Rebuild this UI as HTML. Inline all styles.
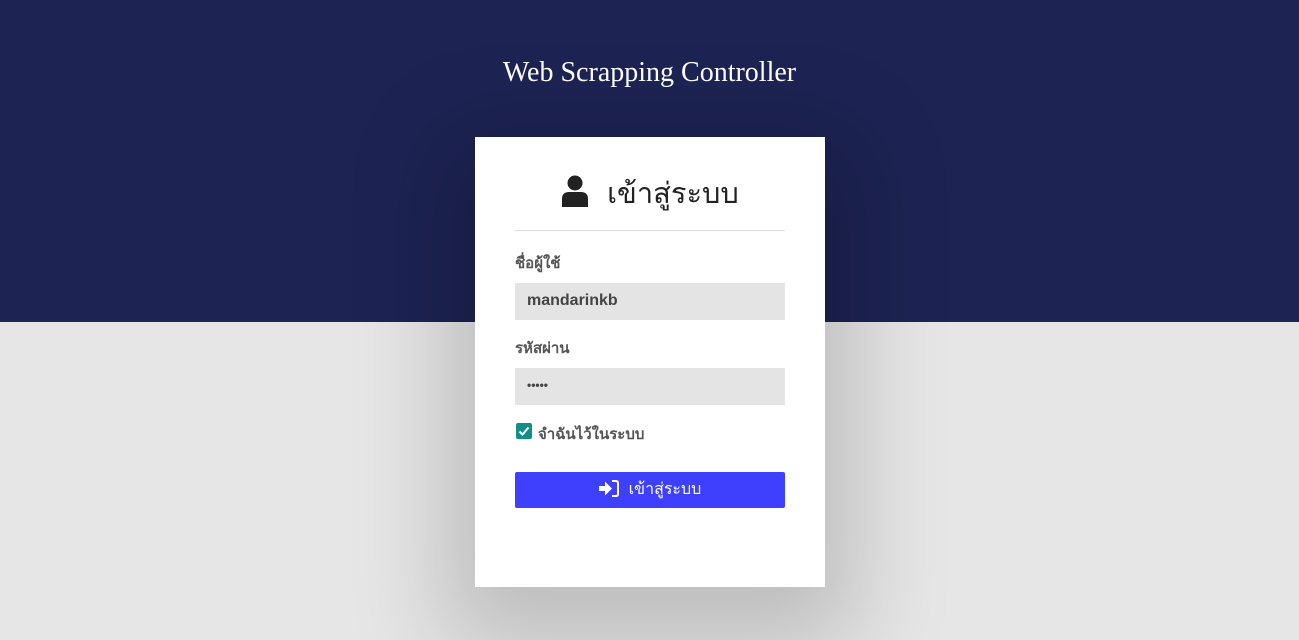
<!DOCTYPE html>
<html><head><meta charset="utf-8"><style>
html,body{margin:0;padding:0;width:1299px;height:640px;overflow:hidden;background:#e6e6e6;font-family:"Liberation Sans","DejaVu Sans",sans-serif;}
.top{position:absolute;left:0;top:0;width:1299px;height:322px;background:#1d2353;}
.title{position:absolute;top:57px;width:100%;text-align:center;color:#fff;font-family:"Liberation Serif",serif;font-size:28px;}
.card{position:absolute;left:475px;top:137px;width:350px;height:450px;background:#fff;box-shadow:0 30px 90px 30px rgba(0,0,0,0.18);}
.h{position:absolute;top:33px;left:0;width:100%;text-align:center;font-size:29px;color:#222;}
.h svg{vertical-align:-4px;margin-right:18px}
.hr{position:absolute;left:40px;top:93px;width:270px;height:1px;background:#ddd;}
.lbl{position:absolute;left:40px;font-size:15px;color:#555;font-weight:bold;}
.in{position:absolute;left:40px;width:270px;height:37px;background:#e4e4e4;color:#444;font-size:16px;font-weight:bold;line-height:35px;box-sizing:border-box;padding-left:12px;}
.cb{position:absolute;left:41px;top:286px;width:16px;height:16px;background:#0f8f87;border-radius:2px;}
.btn{position:absolute;left:40px;top:335px;width:270px;height:36px;background:#3e40fd;border-radius:2px;color:#fff;text-align:center;line-height:36px;font-size:16px;}
.btn svg{vertical-align:-3px;margin-right:10px}
</style></head><body>
<div class="top"></div>
<div class="title">Web Scrapping Controller</div>
<div class="card">
<div class="h"><svg width="28" height="32" viewBox="0 0 28 32"><circle cx="14" cy="8" r="7.5" fill="#222"/><path d="M1 32 V24 Q1 17 8 17 H20 Q27 17 27 24 V32 Z" fill="#222"/></svg>เข้าสู่ระบบ</div>
<div class="hr"></div>
<div class="lbl" style="top:114px">ชื่อผู้ใช้</div>
<div class="in" style="top:146px">mandarinkb</div>
<div class="lbl" style="top:199px">รหัสผ่าน</div>
<div class="in" style="top:231px;font-size:12px">•••••</div>
<div class="cb"><svg width="16" height="16" viewBox="0 0 16 16"><path d="M3.5 8.5 L6.5 11.5 L12.5 4.5" stroke="#fff" stroke-width="2" fill="none"/></svg></div>
<div class="lbl" style="top:285px;left:63px">จำฉันไว้ในระบบ</div>
<div class="btn"><svg width="20" height="17" viewBox="0 0 20 17"><path d="M0 6 H6 V1.5 L13 8.5 L6 15.5 V11 H0 Z" fill="#fff"/><path d="M13 1 H17 Q19 1 19 3 V14 Q19 16 17 16 H13" stroke="#fff" stroke-width="2" fill="none"/></svg>เข้าสู่ระบบ</div>
</div>
</body></html>
